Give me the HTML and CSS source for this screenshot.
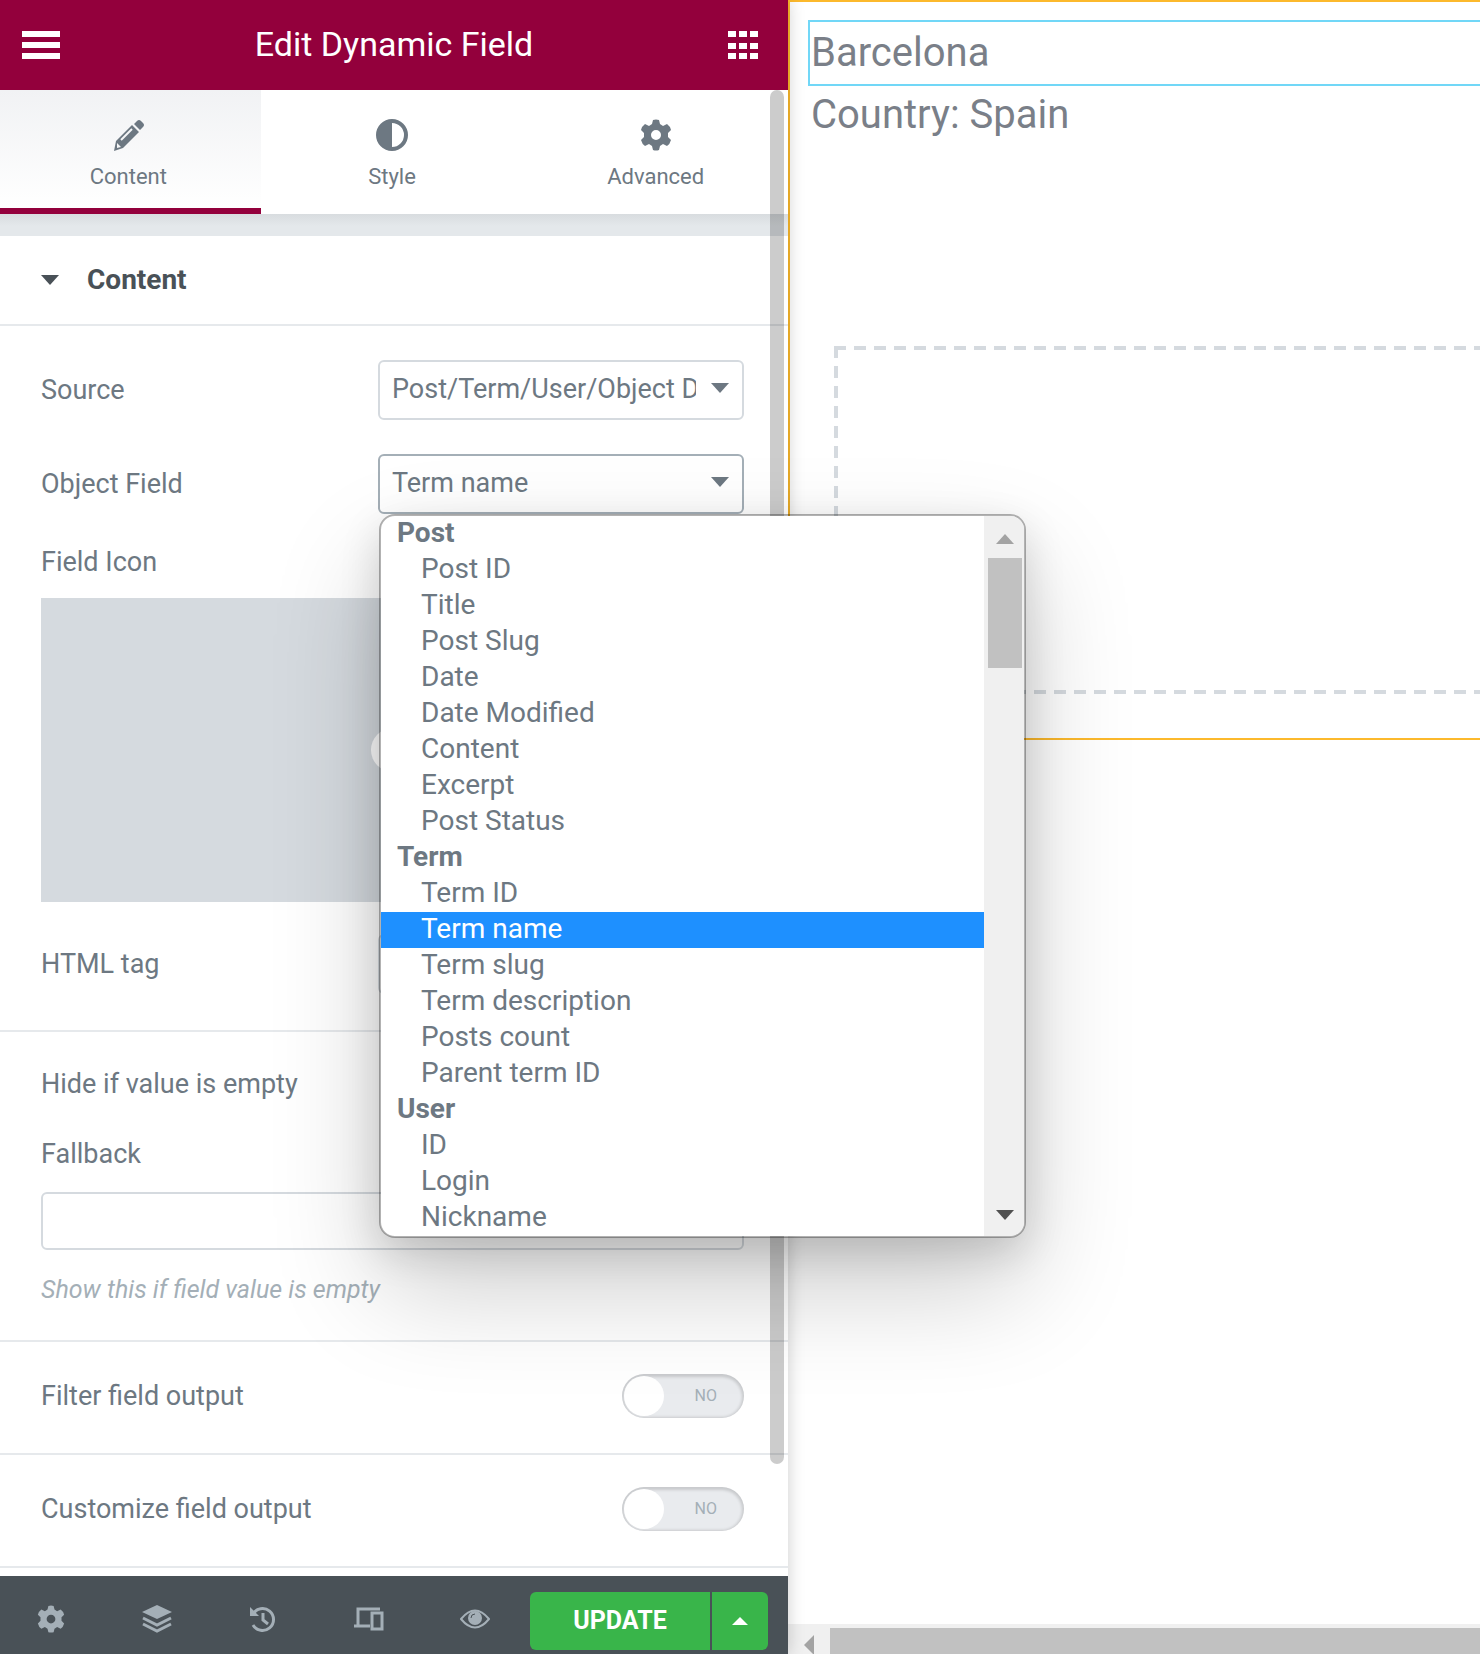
FILE: index.html
```html
<!DOCTYPE html>
<html lang="en">
<head>
  <meta charset="UTF-8">
  <meta name="viewport" content="width=device-width, initial-scale=1.0">
  <title>Edit Dynamic Field</title>
  <link rel="stylesheet" href="styles.css">
</head>
<body>
<div class="editor">
  <aside class="panel">
    <header class="panel-header">
      <button class="icon-btn" aria-label="Menu">
        <svg width="38" height="28" viewBox="0 0 38 28" fill="currentColor"><path d="M0 0h38v6H0zM0 11h38v6H0zM0 22h38v6H0z"/></svg>
      </button>
      <h1>Edit Dynamic Field</h1>
      <button class="icon-btn" aria-label="Widgets">
        <svg width="30" height="28" viewBox="0 0 30 28" fill="currentColor"><path d="M0 0h8v6H0zM11 0h8v6h-8zM22 0h8v6h-8zM0 12h8v6H0zM11 12h8v6h-8zM22 12h8v6h-8zM0 22h8v6H0zM11 22h8v6h-8zM22 22h8v6h-8z"/></svg>
      </button>
    </header>

    <div class="panel-body">
      <nav class="tabs">
        <button class="tab active">
          <svg width="32" height="32" viewBox="0 0 32 32"><path fill="currentColor" d="M22 5l3-3q2-2 4 0l2 2q2 2 0 4l-3 3zM20 6l7 7L11 29l-9 3 2-10z"/><path d="M9 21L20 10" stroke="#f6f7f8" stroke-width="2"/><path d="M5 24l4 4-4 1z" fill="#f6f7f8"/></svg>
          <span>Content</span>
        </button>
        <button class="tab">
          <svg width="32" height="32" viewBox="0 0 32 32"><circle cx="16" cy="16" r="14" fill="none" stroke="currentColor" stroke-width="4"/><path d="M16 1a15 15 0 0 0 0 30z" fill="currentColor"/></svg>
          <span>Style</span>
        </button>
        <button class="tab">
          <svg width="32" height="32" viewBox="0 0 32 32"><use href="#gear"/></svg>
          <span>Advanced</span>
        </button>
      </nav>

      <button class="section-title"><i class="caret"></i>Content</button>

      <div class="controls">
        <div class="control source">
          <label for="source">Source</label>
          <div class="select-wrap">
            <select id="source"><option>Post/Term/User/Object Data</option></select>
            <i class="caret"></i>
          </div>
        </div>
        <div class="control object">
          <label for="objectField">Object Field</label>
          <div class="select-wrap">
            <select id="objectField" class="focused"><option>Term name</option></select>
            <i class="caret"></i>
            <div class="dropdown">
              <ul class="options">
                <li class="group">Post</li>
                <li>Post ID</li>
                <li>Title</li>
                <li>Post Slug</li>
                <li>Date</li>
                <li>Date Modified</li>
                <li>Content</li>
                <li>Excerpt</li>
                <li>Post Status</li>
                <li class="group">Term</li>
                <li>Term ID</li>
                <li class="selected">Term name</li>
                <li>Term slug</li>
                <li>Term description</li>
                <li>Posts count</li>
                <li>Parent term ID</li>
                <li class="group">User</li>
                <li>ID</li>
                <li>Login</li>
                <li>Nickname</li>
              </ul>
              <div class="list-scroll">
                <i class="arrow-up"></i>
                <i class="thumb"></i>
                <i class="arrow-down"></i>
              </div>
            </div>
          </div>
        </div>
        <div class="control-block">
          <span class="label">Field Icon</span>
          <button class="media" aria-label="Choose icon"><i class="media-plus"></i></button>
        </div>
        <div class="control tag">
          <label for="htmlTag">HTML tag</label>
          <div class="select-wrap">
            <select id="htmlTag"><option>DIV</option></select>
            <i class="caret"></i>
          </div>
        </div>
      </div>

      <div class="controls fallback">
        <span class="label">Hide if value is empty</span>
        <label for="fallback">Fallback</label>
        <input type="text" id="fallback">
        <p class="description">Show this if field value is empty</p>
      </div>

      <label class="switch-row">Filter field output
        <input type="checkbox" class="switch-input">
        <span class="switch">NO</span>
      </label>
      <label class="switch-row">Customize field output
        <input type="checkbox" class="switch-input">
        <span class="switch">NO</span>
      </label>
      <i class="panel-scroll"></i>
    </div>

    <footer class="panel-footer">
      <button class="tool" aria-label="Settings">
        <svg width="28" height="28" viewBox="0 0 32 32"><use href="#gear"/></svg>
      </button>
      <button class="tool" aria-label="Navigator">
        <svg width="30" height="28" viewBox="0 0 30 28"><path fill="currentColor" d="M15 0l15 7-15 7L0 7z"/><path d="M1 13l14 7 14-7M1 19l14 7 14-7" fill="none" stroke="currentColor" stroke-width="3"/></svg>
      </button>
      <button class="tool" aria-label="History">
        <svg width="28" height="28" viewBox="0 0 28 28" fill="none" stroke="currentColor" stroke-width="3"><path d="M4 9a11 11 0 1 1 0 11"/><path d="M14 8v7l5 4"/><path d="M1 2v9h9z" fill="currentColor" stroke="none"/></svg>
      </button>
      <button class="tool" aria-label="Responsive mode">
        <svg width="30" height="28" viewBox="0 0 30 28" fill="none" stroke="currentColor" stroke-width="2"><path d="M4 20V4h22M0 21h16" stroke-width="3"/><path d="M18 8h10v16H18z" stroke-width="3"/></svg>
      </button>
      <button class="tool" aria-label="Preview">
        <svg width="30" height="28" viewBox="0 0 30 28"><path d="M1 14Q15-3 29 14 15 31 1 14z" fill="none" stroke="currentColor" stroke-width="2"/><circle cx="15" cy="13" r="7" fill="currentColor"/><path d="M11 13q0-4 4-4" stroke="#495157" fill="none"/></svg>
      </button>
      <div class="update-group">
        <button class="update">UPDATE</button>
        <button class="update-more" aria-label="Save options"><i class="caret-up"></i></button>
      </div>
    </footer>
  </aside>

  <main class="preview">
    <section class="preview-section">
      <p class="widget selected-widget">Barcelona</p>
      <p class="widget">Country: Spain</p>
      <div class="drop-area"></div>
    </section>
    <div class="h-scroll"><i class="arrow-left"></i><i class="h-thumb"></i></div>
  </main>
</div>

<svg width="0" height="0" class="defs">
  <symbol id="gear" viewBox="0 0 32 32">
    <path fill="currentColor" fill-rule="evenodd" d="M13 1q3-1 6 0l1 4 3 2 4-2q3 2 4 6l-3 3v4l3 3q-1 4-4 6l-4-2-3 2-1 4q-3 1-6 0l-1-4-3-2-4 2q-3-2-4-6l3-3v-4l-3-3q1-4 4-6l4 2 3-2zM16 11a5 5 0 1 0 0 10 5 5 0 0 0 0-10z"/>
  </symbol>
</svg>
</body>
</html>
```
FILE: styles.css
```css
* { margin: 0; padding: 0; box-sizing: border-box; }
body {
  font-family: Roboto, sans-serif;
  font-size: 27px;
  line-height: 36px;
  color: #6d7882;
  background: #fff;
}
button, input, select { font: inherit; color: inherit; }
button { border: none; background: none; cursor: pointer; }
svg { display: block; }
.defs { position: absolute; }
.editor {
  display: flex;
  height: 100vh;
  overflow: hidden;
}

/* Panel */
.panel {
  position: relative;
  z-index: 2;
  display: flex;
  flex-direction: column;
  flex: 0 0 788px;
  background: #fff;
  box-shadow: 0 0 16px rgba(0, 0, 0, 0.2);
}
.panel-header {
  display: flex;
  align-items: center;
  justify-content: space-between;
  height: 90px;
  padding: 0 30px 0 22px;
  background: #93003c;
  color: #fff;
}
.panel-header h1 {
  padding-bottom: 2px;
  font-size: 34px;
  font-weight: 400;
}
.panel-body {
  position: relative;
  flex: 1;
  min-height: 0;
}
.panel-scroll {
  position: absolute;
  top: 0;
  right: 4px;
  bottom: 112px;
  width: 14px;
  border-radius: 7px;
  background: rgba(0, 0, 0, 0.2);
}

.tabs {
  display: grid;
  grid-template-columns: repeat(3, 1fr);
  gap: 3px;
  height: 124px;
}
.tab {
  display: flex;
  flex-direction: column;
  align-items: center;
  gap: 8px;
  padding-top: 29px;
  padding-right: 4px;
  font-size: 22px;
  line-height: 36px;
}
.tab.active {
  background: linear-gradient(#f1f2f4, #fff);
  border-bottom: 6px solid #93003c;
}
.section-title {
  display: flex;
  align-items: center;
  gap: 28px;
  width: 100%;
  height: 112px;
  padding: 22px 41px 0;
  border-bottom: 2px solid #e6e9ec;
  background: linear-gradient(#d8dcdf, #e4e8eb 12px, #e4e8eb 22px, #fff 22px);
  color: #495157;
  font-size: 28px;
  font-weight: 700;
}
.caret {
  border: 9px solid transparent;
  border-top: 10px solid currentColor;
  border-bottom: 0;
}

/* Controls */
.controls {
  padding: 34px 44px 0 41px;
  border-bottom: 2px solid #e6e9ec;
}
.control {
  display: flex;
  align-items: center;
  justify-content: space-between;
  height: 60px;
}
.object { margin-top: 34px; }
.tag { margin: 32px 0 36px; }
.select-wrap {
  position: relative;
  width: 366px;
}
.select-wrap select {
  display: block;
  width: 100%;
  height: 60px;
  padding: 0 46px 2px 12px;
  border: 2px solid #d5dadf;
  border-radius: 6px;
  background: #fff;
  appearance: none;
}
.select-wrap select.focused { border-color: #a4afb7; }
.select-wrap > .caret {
  position: absolute;
  top: 23px;
  right: 15px;
}
.control-block { margin-top: 30px; }
.label, .controls label { display: block; }
.media {
  display: flex;
  align-items: center;
  justify-content: center;
  width: 100%;
  height: 304px;
  margin-top: 18px;
  background: #d5dadf;
}
.media-plus {
  width: 44px;
  height: 44px;
  border-radius: 50%;
  background: #fff;
}
.fallback label { margin: 34px 0 20px; }
#fallback {
  display: block;
  width: 100%;
  height: 58px;
  padding: 0 12px;
  border: 2px solid #d5dadf;
  border-radius: 6px;
}
.description {
  margin: 22px 0 32px;
  font-size: 25px;
  font-style: italic;
  color: #a4afb7;
}
.switch-row {
  position: relative;
  display: flex;
  align-items: center;
  justify-content: space-between;
  height: 113px;
  padding: 0 44px 4px 41px;
  border-bottom: 2px solid #e6e9ec;
}
.switch-input {
  position: absolute;
  opacity: 0;
}
.switch {
  display: flex;
  align-items: center;
  justify-content: space-between;
  width: 122px;
  height: 44px;
  padding-right: 27px;
  border-radius: 22px;
  background: #e9ebee;
  box-shadow: inset 0 1px 3px 2px rgba(0, 0, 0, 0.14);
  color: #a4afb7;
  font-size: 16px;
}
.switch::before {
  content: "";
  width: 40px;
  height: 40px;
  margin-left: 2px;
  border-radius: 50%;
  background: #fff;
}

/* Open list */
.dropdown {
  position: absolute;
  z-index: 5;
  top: 60px;
  left: 1px;
  display: flex;
  width: 647px;
  border: 2px solid rgba(0, 0, 0, 0.3);
  border-radius: 16px;
  background: #fff;
  background-clip: padding-box;
  box-shadow: 0 50px 110px rgba(0, 0, 0, 0.2), 0 14px 40px rgba(0, 0, 0, 0.14);
  overflow: hidden;
}
.options {
  flex: 1;
  list-style: none;
  font-size: 28px;
}
.options li {
  height: 36px;
  padding-left: 40px;
  line-height: 34px;
}
.options .group {
  padding-left: 16px;
  font-weight: 700;
}
.options .selected {
  background: #1e90ff;
  color: #fff;
}
.list-scroll {
  display: flex;
  flex-direction: column;
  align-items: center;
  width: 40px;
  padding: 18px 0 16px 2px;
  background: #f0f0f0;
}
.arrow-up, .caret-up {
  border: 9px solid transparent;
  border-bottom: 10px solid #a3a3a3;
  border-top: 0;
}
.arrow-down {
  margin-top: auto;
  border: 9px solid transparent;
  border-top: 10px solid #505050;
  border-bottom: 0;
}
.thumb {
  width: 34px;
  height: 110px;
  margin-top: 14px;
  background: #c1c1c1;
}

/* Footer */
.panel-footer {
  display: flex;
  align-items: center;
  height: 78px;
  padding: 12px 20px 0 0;
  background: #495157;
  color: #a4afb7;
}
.tool {
  display: flex;
  flex: 1;
  justify-content: center;
  padding: 0 4px 4px 0;
}
.update-group {
  display: flex;
  gap: 2px;
  height: 58px;
  color: #fff;
}
.update {
  width: 180px;
  border-radius: 6px 0 0 6px;
  background: #39b54a;
  font-size: 25px;
  font-weight: 700;
}
.update-more {
  display: flex;
  align-items: center;
  justify-content: center;
  width: 56px;
  border-radius: 0 6px 6px 0;
  background: #39b54a;
}
.caret-up {
  border-width: 0 8px 8px;
  border-bottom-color: #fff;
}

/* Preview */
.preview {
  display: flex;
  flex-direction: column;
  justify-content: space-between;
  flex: 1;
  min-width: 0;
}
.preview-section {
  height: 740px;
  padding: 18px 0 0 18px;
  border: 2px solid #fcb92c;
  border-right: 0;
}
.widget {
  height: 62px;
  padding: 0 3px;
  font-size: 40px;
  line-height: 58px;
  color: #7a7f88;
}
.selected-widget {
  height: 66px;
  border: 2px solid #71d7f7;
  border-right: 0;
  padding: 2px 0 0 1px;
}
/* long dashes, 12px on and 8px off */
.drop-area {
  height: 348px;
  margin: 198px 0 0 26px;
  background:
    repeating-linear-gradient(90deg, #d5dadf 0 12px, transparent 12px 20px) 0 0 / 100% 4px no-repeat,
    repeating-linear-gradient(90deg, #d5dadf 0 12px, transparent 12px 20px) 0 100% / 100% 4px no-repeat,
    repeating-linear-gradient(#d5dadf 0 12px, transparent 12px 20px) 0 0 / 4px 100% no-repeat;
}
.h-scroll {
  display: flex;
  align-items: center;
  gap: 16px;
  height: 30px;
  padding: 4px 0 0 16px;
  background: #f0f0f0;
}
.arrow-left {
  margin-top: 8px;
  border: 10px solid transparent;
  border-right-color: #a3a3a3;
  border-left: 0;
}
.h-thumb {
  flex: 1;
  align-self: stretch;
  background: #c1c1c1;
}
```
